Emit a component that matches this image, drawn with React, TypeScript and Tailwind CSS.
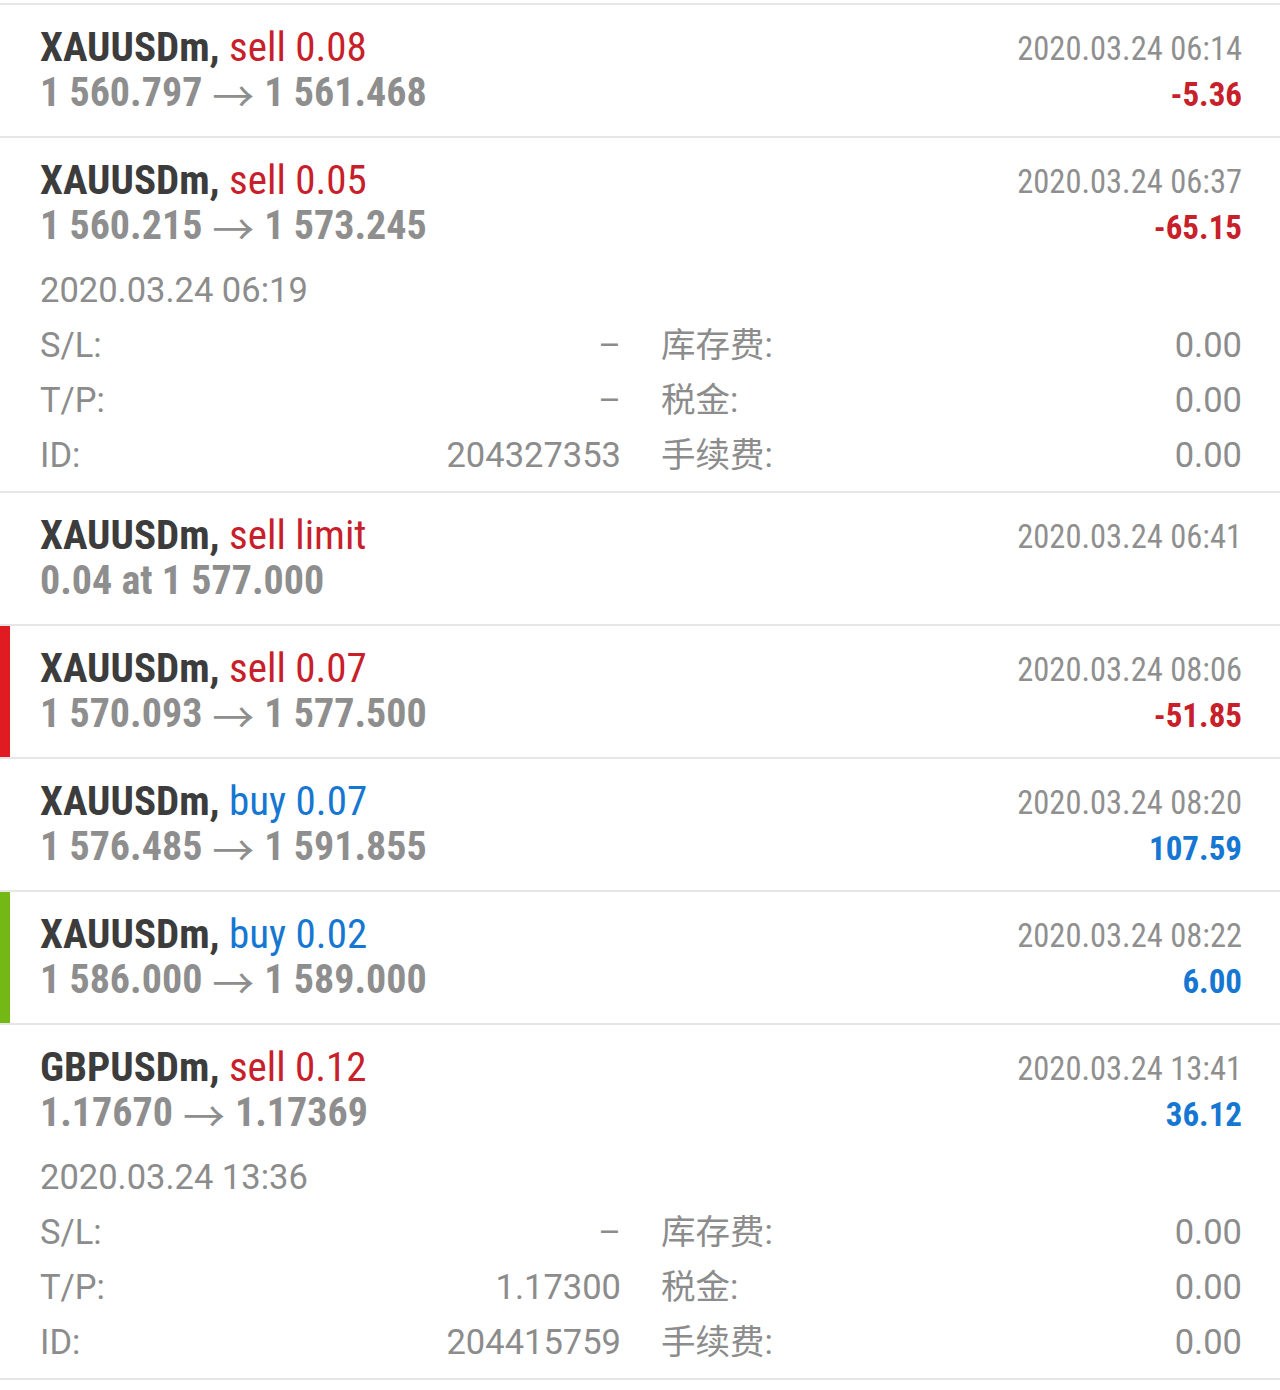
import React from "react"

type Detail = {
	opened: string
	sl: string
	tp: string
	id: string
}

type Deal = {
	symbol: string
	side: string
	sideColor: "sell" | "buy"
	from?: string
	to?: string
	prices?: string
	time: string
	profit?: string
	profitColor?: "sell" | "buy"
	bar?: "red" | "green"
	details?: Detail
}

const deals: Deal[] = [
	{ symbol: "XAUUSDm", side: "sell 0.08", sideColor: "sell", from: "1 560.797", to: "1 561.468", time: "2020.03.24 06:14", profit: "-5.36", profitColor: "sell" },
	{
		symbol: "XAUUSDm", side: "sell 0.05", sideColor: "sell", from: "1 560.215", to: "1 573.245", time: "2020.03.24 06:37", profit: "-65.15", profitColor: "sell",
		details: { opened: "2020.03.24 06:19", sl: "–", tp: "–", id: "204327353" },
	},
	{ symbol: "XAUUSDm", side: "sell limit", sideColor: "sell", prices: "0.04 at 1 577.000", time: "2020.03.24 06:41" },
	{ symbol: "XAUUSDm", side: "sell 0.07", sideColor: "sell", from: "1 570.093", to: "1 577.500", time: "2020.03.24 08:06", profit: "-51.85", profitColor: "sell", bar: "red" },
	{ symbol: "XAUUSDm", side: "buy 0.07", sideColor: "buy", from: "1 576.485", to: "1 591.855", time: "2020.03.24 08:20", profit: "107.59", profitColor: "buy" },
	{ symbol: "XAUUSDm", side: "buy 0.02", sideColor: "buy", from: "1 586.000", to: "1 589.000", time: "2020.03.24 08:22", profit: "6.00", profitColor: "buy", bar: "green" },
	{
		symbol: "GBPUSDm", side: "sell 0.12", sideColor: "sell", from: "1.17670", to: "1.17369", time: "2020.03.24 13:41", profit: "36.12", profitColor: "buy",
		details: { opened: "2020.03.24 13:36", sl: "–", tp: "1.17300", id: "204415759" },
	},
]

const cond = "font-['Roboto_Condensed',Roboto,sans-serif]"
const plain = "font-['Roboto','Noto_Sans_CJK_SC',sans-serif]"

function DetailRow({ label, value, label2, value2 }: { label: string; value: string; label2: string; value2: string }) {
	return (
		<div className="grid grid-cols-2 gap-x-10 h-[55px] items-center">
			<div className="flex justify-between">
				<span>{label}</span>
				<span>{value}</span>
			</div>
			<div className="flex justify-between">
				<span>{label2}</span>
				<span>{value2}</span>
			</div>
		</div>
	)
}

function DealRow({ deal }: { deal: Deal }) {
	const sideCls = deal.sideColor === "sell" ? "text-[#c8202a]" : "text-[#1677d2]"
	const profitCls = deal.profitColor === "sell" ? "text-[#c8202a]" : "text-[#1677d2]"
	const barCls = deal.bar === "red" ? "bg-[#e01b22]" : deal.bar === "green" ? "bg-[#74b816]" : "bg-transparent"

	return (
		<div className="border-b-2 border-[#e6e6e6] flex">
			<div className={`w-[10px] shrink-0 ${barCls}`} />
			<div className={`flex-1 pl-[30px] pr-[38px] ${deal.details ? "h-[353px]" : "h-[131px]"}`}>
				<div className="flex justify-between pt-[19px]">
					<div className={`${cond} text-[41px] leading-[46px]`}>
						<div className="font-bold text-[#3c3c3c]">
							{deal.symbol}, <span className={`font-normal ${sideCls}`}>{deal.side}</span>
						</div>
						<div className="font-bold text-[#8e8e8e] text-[40px] h-[46px] flex items-center">
							{deal.prices ? (
								deal.prices
							) : (
								<>
									<span>{deal.from}</span>
									<span className="font-['Noto_Sans_CJK_SC',sans-serif] font-normal text-[42px] leading-none mx-[10px] relative top-[1px]">→</span>
									<span>{deal.to}</span>
								</>
							)}
						</div>
					</div>
					<div className={`${cond} text-[32.5px] leading-[46px] text-right pt-[2px]`}>
						<div className="text-[#8f8f8f]">{deal.time}</div>
						{deal.profit && <div className={`font-bold text-[33px] ${profitCls}`}>{deal.profit}</div>}
					</div>
				</div>
				{deal.details && (
					<div className={`${plain} text-[34.5px] text-[#8c8c8c] mt-[12px]`}>
						<div className="h-[55px] flex items-center">{deal.details.opened}</div>
						<DetailRow label="S/L:" value={deal.details.sl} label2="库存费:" value2="0.00" />
						<DetailRow label="T/P:" value={deal.details.tp} label2="税金:" value2="0.00" />
						<DetailRow label="ID:" value={deal.details.id} label2="手续费:" value2="0.00" />
					</div>
				)}
			</div>
		</div>
	)
}

export default function App() {
	return (
		<div className="w-[1280px] h-[1390px] bg-white overflow-hidden">
			<div className="mt-[3px] border-t-2 border-[#e6e6e6]">
				{deals.map((d, i) => (
					<DealRow key={i} deal={d} />
				))}
			</div>
		</div>
	)
}
